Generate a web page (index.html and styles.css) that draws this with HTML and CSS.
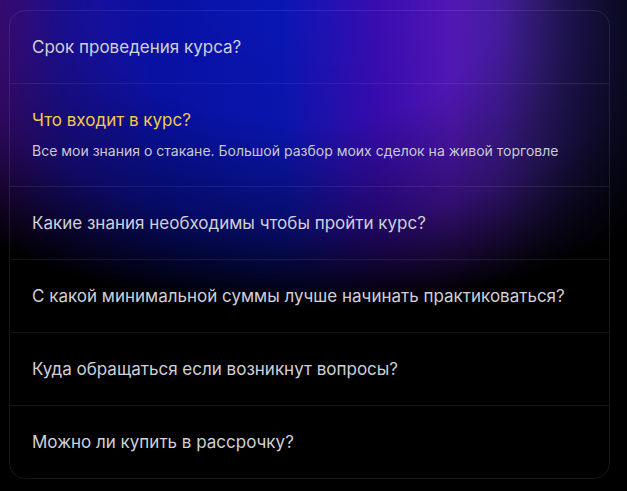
FILE: index.html
```html
<!DOCTYPE html>
<html lang="ru">
<head>
<meta charset="utf-8">
<title>FAQ</title>
<link rel="stylesheet" href="styles.css">
</head>
<body>
<div class="page">
  <div class="faq">
    <div class="item"><div class="q">Срок проведения курса?</div></div>
    <div class="item open">
      <div class="q">Что входит в курс?</div>
      <div class="a">Все мои знания о стакане. Большой разбор моих сделок на живой торговле</div>
    </div>
    <div class="item"><div class="q">Какие знания необходимы чтобы пройти курс?</div></div>
    <div class="item"><div class="q">С какой минимальной суммы лучше начинать практиковаться?</div></div>
    <div class="item"><div class="q">Куда обращаться если возникнут вопросы?</div></div>
    <div class="item"><div class="q">Можно ли купить в рассрочку?</div></div>
  </div>
</div>
</body>
</html>
```

FILE: styles.css
```css
html, body {
  margin: 0;
  padding: 0;
  height: 100%;
  background: #000;
}
body {
  font-family: Inter, "Noto Sans", sans-serif;
  overflow: hidden;
}
.page {
  position: relative;
  width: 627px;
  height: 491px;
  box-sizing: border-box;
  padding: 10px 17px 12px 9px;
  background: #000;
  isolation: isolate;
}
.page::before {
  content: "";
  position: absolute;
  inset: 0;
  z-index: -1;
  background:
    linear-gradient(90deg, rgba(0,0,0,0) 0, rgba(0,0,0,0) 80%, rgba(0,0,0,0.5) 100%),
    linear-gradient(90deg, #4a0e96 0, #1e10a2 10%, #0812aa 26%, #0a16b4 45%, #3a0cb4 60%, #5418bc 72%, #3e2294 86%, #1c1c66 100%);
  -webkit-mask-image: radial-gradient(ellipse 500px 310px at 300px 0, #000 0, rgba(0,0,0,0.95) 40%, rgba(0,0,0,0.6) 72%, transparent 100%);
  mask-image: radial-gradient(ellipse 500px 310px at 300px 0, #000 0, rgba(0,0,0,0.95) 40%, rgba(0,0,0,0.6) 72%, transparent 100%);
}
.faq {
  border: 1px solid rgba(255, 255, 255, 0.09);
  border-radius: 16px;
  overflow: hidden;
}
.item {
  padding: 24px 22px;
  border-top: 1px solid rgba(255, 255, 255, 0.08);
}
.item:first-child {
  border-top: none;
}
.q {
  font-size: 17px;
  line-height: 24px;
  color: #d0d0d8;
}
.open .q {
  color: #f2c94c;
}
.a {
  margin-top: 8px;
  font-size: 14px;
  line-height: 22px;
  color: #c9c9d2;
}
```
